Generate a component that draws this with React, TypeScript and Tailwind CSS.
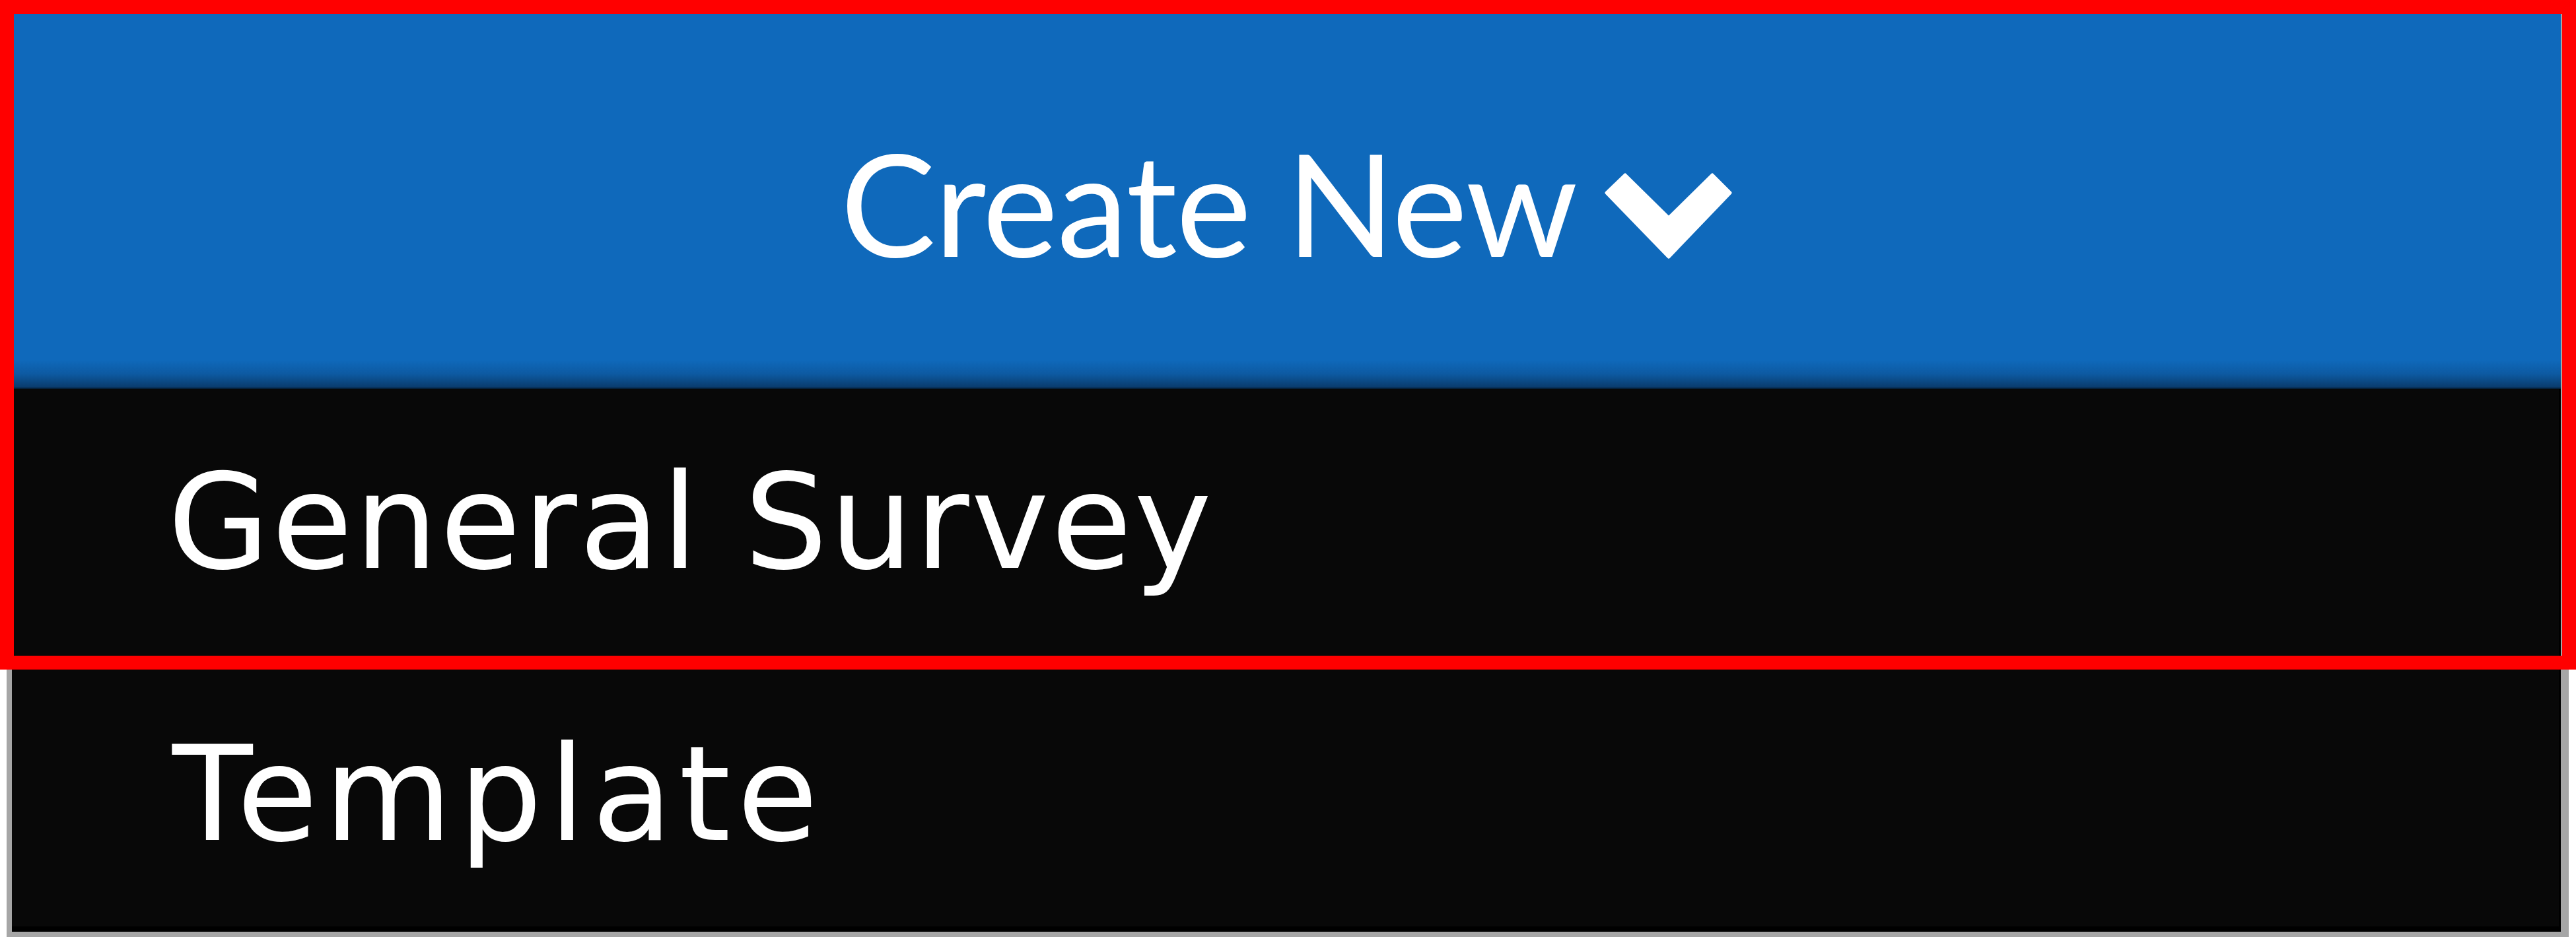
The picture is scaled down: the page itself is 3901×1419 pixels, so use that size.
const items = [
  { label: 'General Survey', extra: 'tracking-[0.016em] pl-[236px]', height: 'h-[405px]' },
  { label: 'Template', extra: 'tracking-[0.05em] pl-[243px]', height: 'h-[409px] pt-[10px]' },
];

function ChevronDown() {
  return (
    <svg viewBox="0 0 193 130" className="w-[193px] h-[130px] shrink-0 mt-[64px]" fill="#ffffff" stroke="#ffffff" strokeWidth="5" strokeLinejoin="round">
      <polygon points="31,3 97,68 163,3 190,30 97,127 3,30" />
    </svg>
  );
}

export default function App() {
  return (
    <div className="relative w-[3901px] h-[1419px] bg-white overflow-hidden">
      <div className="ml-[10px] w-[3880px] h-[1419px] border-l-[8px] border-r-[12px] border-b-[8px] border-[#a6a6a6] bg-[#080808] flex flex-col">
        <div className="h-[589px] shrink-0 flex items-center justify-center gap-[42px] text-white bg-[linear-gradient(to_bottom,#0f69bb_0px,#0f69bb_545px,#0d5aa2_566px,#0a3c6e_586px,#04182c_589px)]">
          <span className="font-['Lato',sans-serif] text-[216px] leading-none tracking-[-0.006em] mt-[22px]">Create New</span>
          <ChevronDown />
        </div>
        <div className="flex-1 flex flex-col border-r-[3px] border-b-[8px] border-black">
          {items.map((item) => (
            <div
              key={item.label}
              className={`${item.height} ${item.extra} flex items-center text-white font-['DejaVu_Sans',sans-serif] text-[199px] leading-none`}
            >
              {item.label}
            </div>
          ))}
        </div>
      </div>
      {/* annotation frame */}
      <div className="absolute left-0 top-0 w-[3901px] h-[1014px] border-[21px] border-[#ff0000] pointer-events-none" />
    </div>
  );
}
